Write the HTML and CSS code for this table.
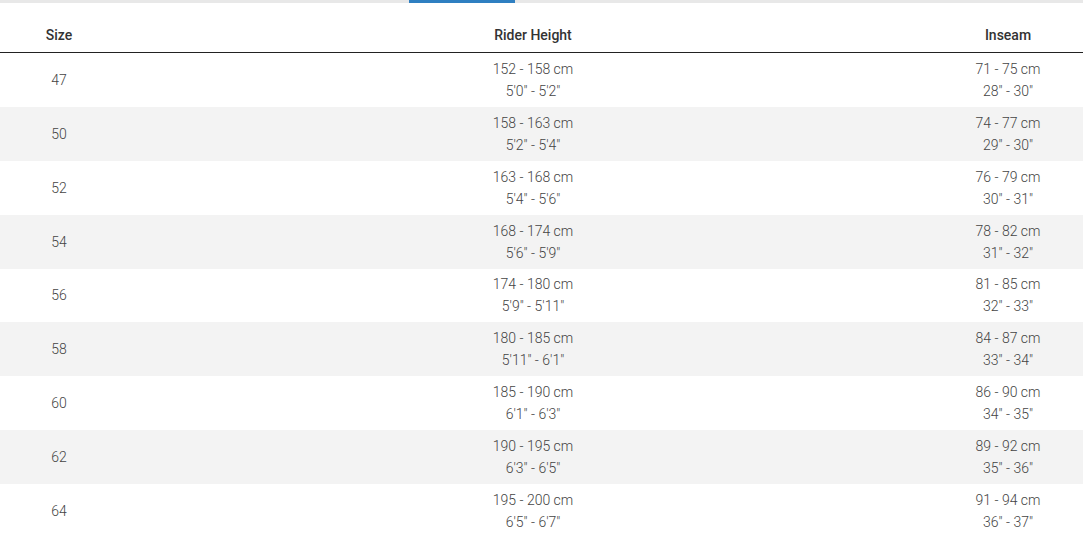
FILE: index.html
```html
<!DOCTYPE html>
<html>
<head>
<meta charset="utf-8">
<link rel="stylesheet" href="styles.css">
</head>
<body>
<div class="tabs"><div class="tab-active"></div></div>
<div class="table">
  <div class="row head">
    <div class="cell">Size</div>
    <div class="cell">Rider Height</div>
    <div class="cell">Inseam</div>
  </div>
  <div class="row"><div class="cell">47</div><div class="cell">152 - 158 cm<br>5'0" - 5'2"</div><div class="cell">71 - 75 cm<br>28" - 30"</div></div>
  <div class="row alt"><div class="cell">50</div><div class="cell">158 - 163 cm<br>5'2" - 5'4"</div><div class="cell">74 - 77 cm<br>29" - 30"</div></div>
  <div class="row"><div class="cell">52</div><div class="cell">163 - 168 cm<br>5'4" - 5'6"</div><div class="cell">76 - 79 cm<br>30" - 31"</div></div>
  <div class="row alt"><div class="cell">54</div><div class="cell">168 - 174 cm<br>5'6" - 5'9"</div><div class="cell">78 - 82 cm<br>31" - 32"</div></div>
  <div class="row"><div class="cell">56</div><div class="cell">174 - 180 cm<br>5'9" - 5'11"</div><div class="cell">81 - 85 cm<br>32" - 33"</div></div>
  <div class="row alt"><div class="cell">58</div><div class="cell">180 - 185 cm<br>5'11" - 6'1"</div><div class="cell">84 - 87 cm<br>33" - 34"</div></div>
  <div class="row"><div class="cell">60</div><div class="cell">185 - 190 cm<br>6'1" - 6'3"</div><div class="cell">86 - 90 cm<br>34" - 35"</div></div>
  <div class="row alt"><div class="cell">62</div><div class="cell">190 - 195 cm<br>6'3" - 6'5"</div><div class="cell">89 - 92 cm<br>35" - 36"</div></div>
  <div class="row"><div class="cell">64</div><div class="cell">195 - 200 cm<br>6'5" - 6'7"</div><div class="cell">91 - 94 cm<br>36" - 37"</div></div>
</div>
</body>
</html>
```
FILE: styles.css
```css
html, body {
  margin: 0;
  padding: 0;
  background: #fff;
}
body {
  font-family: Roboto, "Liberation Sans", sans-serif;
  color: #444;
  font-size: 14px;
}
.tabs {
  height: 3px;
  background: #e8e8e8;
  display: flex;
  padding-left: 409px;
}
.tab-active {
  width: 106px;
  height: 3px;
  background: #2f7fc1;
}
.row {
  display: grid;
  grid-template-columns: 118px 830px 120px 1fr;
  height: 53.875px;
  align-items: center;
}
.row.alt {
  background: #f3f3f3;
}
.cell {
  text-align: center;
  line-height: 22px;
  font-weight: 300;
}
.head {
  height: 50px;
  align-items: start;
  border-bottom: 1px solid #222;
  box-sizing: border-box;
}
.head .cell {
  padding-top: 24px;
  line-height: 16px;
  font-size: 14px;
  font-weight: 500;
  color: #333;
}
```
